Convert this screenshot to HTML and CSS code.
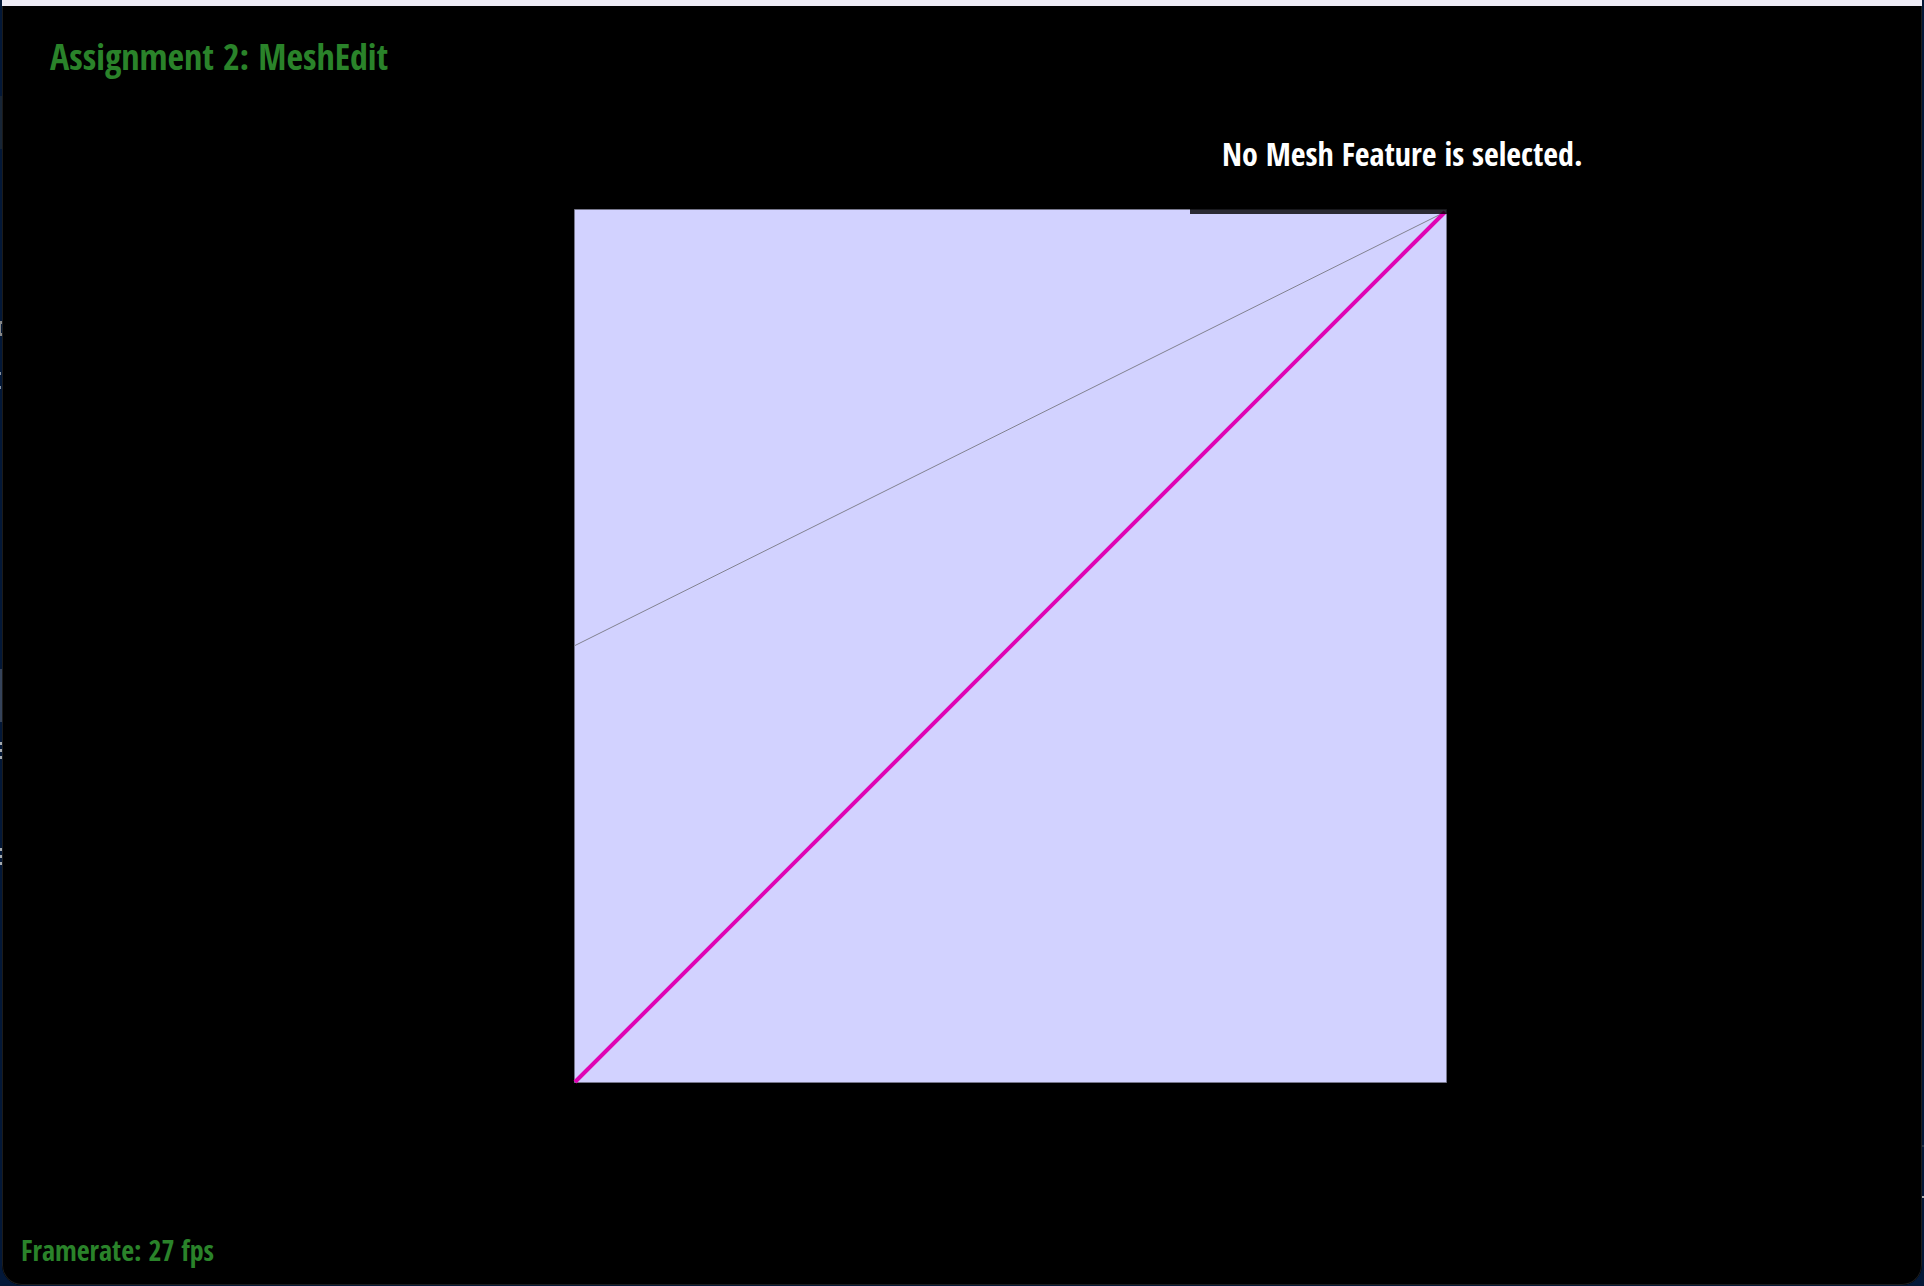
FILE: index.html
```html
<!DOCTYPE html>
<html lang="en">
<head>
<meta charset="utf-8">
<title>MeshEdit</title>
<link rel="stylesheet" href="styles.css">
</head>
<body>
<div class="desktop">
  <svg class="edge edge-left" viewBox="0 0 3 1286" aria-hidden="true">
    <path fill="#172536" d="M0 96h2v53H0z"/>
    <path fill="#35435a" d="M0 669h2v53H0z"/>
    <path fill="#85888b" d="M0 321h2v3H1v9h1v3H0z"/>
    <path fill="#8490a0" d="M0 372h1v3H0zM0 386h1v3H0z"/>
    <path fill="#a4abb2" d="M0 742h2v3H0zM0 749h2v3H0zM0 756h2v3H0zM0 848h2v3H0zM0 855h2v3H0zM0 862h2v3H0z"/>
  </svg>
  <svg class="edge edge-right" viewBox="0 0 3 1286" aria-hidden="true">
    <path fill="#26364b" d="M1 1145h2v2H1z"/>
    <path fill="#a9adb2" d="M1 1196h2v2H1z"/>
  </svg>
  <main class="window">
    <div class="titlebar"></div>
    <div class="viewport">
      <svg class="scene" viewBox="0 0 1918 1278" role="img" aria-label="Mesh">
        <path fill="#d2d2ff" stroke="#77778c" d="M571.500 203.500h872v873h-872z"/>
        <path fill="none" stroke="#828290" d="M571 640L1442 206"/>
        <path fill="none" stroke="#e004b4" stroke-width="4" d="M572 1076L1442 206"/>
      </svg>
      <h1 class="title">Assignment 2: MeshEdit</h1>
      <p class="selection">No Mesh Feature is selected.</p>
      <p class="framerate">Framerate: 27 fps</p>
    </div>
  </main>
</div>
</body>
</html>
```
FILE: styles.css
```css
* { box-sizing: border-box; }
body {
  margin: 0;
  background: #031838;
  font-family: "Open Sans Condensed", "Noto Sans Condensed", "Liberation Sans Narrow", "DejaVu Sans Condensed", sans-serif;
  font-weight: 700;
}
.desktop {
  position: relative;
  min-height: 100vh;
  display: flex;
  padding: 0 2px 1px;
}
.edge {
  position: absolute;
  top: 0;
  width: 3px;
  height: 1286px;
}
.edge-left { left: 0; }
.edge-right { right: 0; }
.window {
  position: relative;
  flex: 1;
  display: flex;
  flex-direction: column;
  border-radius: 0 0 20px 20px;
  overflow: hidden;
  background: #000;
}
.titlebar {
  height: 6px;
  background: #eeebf5;
}
.viewport {
  position: relative;
  flex: 1;
  display: flex;
  flex-direction: column;
  border: solid #1c1c1c;
  border-width: 0 1px 1px;
  border-radius: 0 0 20px 20px;
}
.scene {
  position: absolute;
  top: 0;
  left: 0;
  width: 100%;
}
.title, .selection, .framerate {
  position: relative;
  margin: 0;
  font-weight: 700;
}
.title {
  padding: 27px 47px 0;
  color: #2a832a;
  font-size: 36px;
  line-height: 48px;
}
.selection {
  align-self: flex-end;
  width: 731px;
  margin-top: 43px;
  padding: 8px 32px 38px;
  background: rgba(0, 0, 0, 0.8);
  color: #fff;
  font-size: 32px;
  line-height: 44px;
}
.framerate {
  margin-top: auto;
  padding: 0 18px 15px;
  color: #2a832a;
  font-size: 28px;
  line-height: 38px;
}
```
